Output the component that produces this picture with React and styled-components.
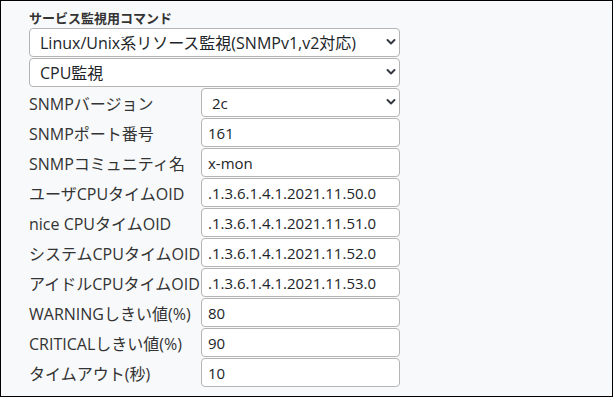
import React from 'react';
import styled, {createGlobalStyle} from 'styled-components';

const GlobalStyle = createGlobalStyle`
    html, body {
        margin: 0;
        padding: 0;
        background: #ffffff;
    }
    body {
        font-family: "Open Sans", "Noto Sans CJK JP", sans-serif;
    }
`;

const Frame = styled.div`
    box-sizing: border-box;
    width: 613px;
    height: 397px;
    border: 1px solid #000;
    background: #f8f9fa;
    padding: 7px 0 0 28px;
`;

const Title = styled.div`
    font-size: 13px;
    font-weight: 700;
    color: #333;
    line-height: 20px;
    height: 20px;
`;

const Stack = styled.div`
    display: flex;
    flex-direction: column;
    gap: 1px;
`;

const Row = styled.div`
    display: flex;
    align-items: center;
    height: 29px;
`;

const Label = styled.div`
    width: 172px;
    flex: none;
    font-size: 16px;
    color: #333;
    white-space: nowrap;
`;

const SelectWrap = styled.div`
    position: relative;
    width: ${p => p.$width}px;
    height: 29px;
`;

const Select = styled.select`
    box-sizing: border-box;
    appearance: none;
    width: 100%;
    height: 100%;
    border: 1px solid #b5b5b5;
    border-radius: 4px;
    background: #fff;
    padding: 0 30px 0 ${p => p.$pad}px;
    font-family: inherit;
    font-size: ${p => p.$size}px;
    color: #212529;
    outline: none;
`;

const Chevron = styled.svg`
    position: absolute;
    right: 4px;
    top: 10px;
    pointer-events: none;
`;

const Input = styled.input`
    box-sizing: border-box;
    width: 199px;
    height: 29px;
    border: 1px solid #b5b5b5;
    border-radius: 4px;
    background: #fff;
    padding: 0 6px;
    font-family: inherit;
    font-size: 15px;
    color: #212529;
    outline: none;
`;

function Dropdown({width, pad, size, options}) {
    return (
        <SelectWrap $width={width}>
            <Select $pad={pad} $size={size} defaultValue={options[0]}>
                {options.map(o => <option key={o}>{o}</option>)}
            </Select>
            <Chevron width="10" height="8" viewBox="0 0 10 8">
                <path d="M1.5 2 L5 5.5 L8.5 2" fill="none" stroke="#343a40" strokeWidth="2" strokeLinecap="round" strokeLinejoin="round" />
            </Chevron>
        </SelectWrap>
    );
}

const fields = [
    ["SNMPポート番号", "161"],
    ["SNMPコミュニティ名", "x-mon"],
    ["ユーザCPUタイムOID", ".1.3.6.1.4.1.2021.11.50.0"],
    ["nice CPUタイムOID", ".1.3.6.1.4.1.2021.11.51.0"],
    ["システムCPUタイムOID", ".1.3.6.1.4.1.2021.11.52.0"],
    ["アイドルCPUタイムOID", ".1.3.6.1.4.1.2021.11.53.0"],
    ["WARNINGしきい値(%)", "80"],
    ["CRITICALしきい値(%)", "90"],
    ["タイムアウト(秒)", "10"],
];

export default function App() {
    return (
        <>
            <GlobalStyle />
            <Frame>
                <Title>サービス監視用コマンド</Title>
                <Stack>
                    <Dropdown width={371} pad={10} size={16} options={["Linux/Unix系リソース監視(SNMPv1,v2対応)"]} />
                    <Dropdown width={371} pad={10} size={16} options={["CPU監視"]} />
                    <Row>
                        <Label>SNMPバージョン</Label>
                        <Dropdown width={199} pad={10} size={15} options={["2c", "1"]} />
                    </Row>
                    {fields.map(([label, value]) => (
                        <Row key={label}>
                            <Label>{label}</Label>
                            <Input defaultValue={value} />
                        </Row>
                    ))}
                </Stack>
            </Frame>
        </>
    );
}
